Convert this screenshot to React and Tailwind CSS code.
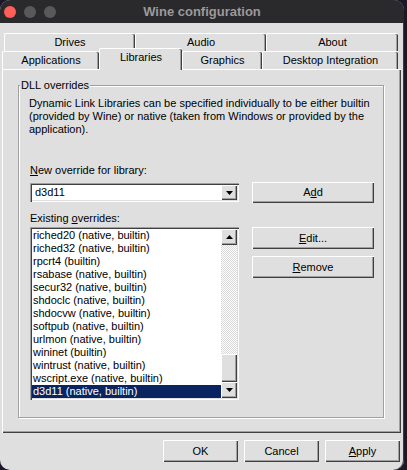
import React from "react";

const raised =
  "shadow-[inset_1px_1px_0_#ffffff,inset_-1px_-1px_0_#404040,inset_-2px_-2px_0_#a0a0a0]";
const sunken =
  "shadow-[inset_1px_1px_0_#a0a0a0,inset_2px_2px_0_#404040,inset_-1px_-1px_0_#ffffff,inset_-2px_-2px_0_#dfdfdf]";

function Down() {
  return (
    <svg width="7" height="4" viewBox="0 0 7 4">
      <path d="M0 0h7L3.5 4z" fill="#000" />
    </svg>
  );
}
function Up() {
  return (
    <svg width="7" height="4" viewBox="0 0 7 4">
      <path d="M0 4h7L3.5 0z" fill="#000" />
    </svg>
  );
}

function Tab({ w, children }) {
  return (
    <div
      className={`${w} h-[18px] rounded-t-[2px] border-t border-l border-white shadow-[inset_-1px_0_0_#404040,inset_-2px_0_0_#a0a0a0] flex items-center justify-center`}
    >
      {children}
    </div>
  );
}

function Btn({ w, h, children, className = "" }) {
  return (
    <div
      className={`${w} ${h} ${raised} bg-[#dfdfdf] flex items-center justify-center ${className}`}
    >
      {children}
    </div>
  );
}

const items = [
  "riched20 (native, builtin)",
  "riched32 (native, builtin)",
  "rpcrt4 (builtin)",
  "rsabase (native, builtin)",
  "secur32 (native, builtin)",
  "shdoclc (native, builtin)",
  "shdocvw (native, builtin)",
  "softpub (native, builtin)",
  "urlmon (native, builtin)",
  "wininet (builtin)",
  "wintrust (native, builtin)",
  "wscript.exe (native, builtin)",
  "d3d11 (native, builtin)",
];

export default function App() {
  return (
    <div className="w-[407px] h-[470px] bg-[#1c1729] font-['Liberation_Sans',sans-serif] text-[11px] leading-[13px] text-black">
      <div className="w-[404px] h-[470px] bg-[#dfdfdf] rounded-[10px] overflow-hidden flex flex-col shadow-[inset_-1px_0_0_#3a3a3a]">
        {/* title bar */}
        <div className="h-[23px] bg-[#2a292c] relative flex items-center pl-[4px] gap-[8px] shrink-0">
          <div className="w-[12px] h-[12px] rounded-full bg-[#fe5f57]" />
          <div className="w-[12px] h-[12px] rounded-full bg-[#59585b]" />
          <div className="w-[12px] h-[12px] rounded-full bg-[#59585b]" />
          <div className="absolute inset-0 flex items-center justify-center text-[13px] font-bold text-[#9a9a9a]">
            Wine configuration
          </div>
        </div>

        {/* tabs row 1 */}
        <div className="mt-[10px] ml-[4px] flex">
          <Tab w="w-[131px]">Drives</Tab>
          <Tab w="w-[131px]">Audio</Tab>
          <Tab w="w-[132px]">About</Tab>
        </div>
        {/* tabs row 2 */}
        <div className="ml-[2px] flex h-[18px] items-start">
          <Tab w="w-[97px]">Applications</Tab>
          <div className="relative z-10 -mt-[3px] w-[83px] h-[22px] rounded-t-[2px] border-t border-l border-white bg-[#dfdfdf] shadow-[inset_-1px_0_0_#404040,inset_-2px_0_0_#a0a0a0] flex justify-center pt-[2px]">
            Libraries
          </div>
          <Tab w="w-[80px]">Graphics</Tab>
          <Tab w="w-[136px]">Desktop Integration</Tab>
        </div>

        {/* panel */}
        <div className="ml-[2px] w-[399px] h-[364px] border-t border-l border-white shadow-[inset_-1px_-1px_0_#404040,inset_-2px_-2px_0_#a0a0a0]">
          <div className="relative mt-[15px] ml-[15px] w-[366px] h-[333px] border border-[#a0a0a0] shadow-[1px_1px_0_#ffffff,inset_1px_1px_0_#ffffff] pl-[10px] pt-[11px]">
            <div className="absolute -top-[7px] left-[1px] bg-[#dfdfdf] px-[1px]">
              DLL overrides
            </div>
            <div className="whitespace-nowrap">
              Dynamic Link Libraries can be specified individually to be either builtin
              <br />
              (provided by Wine) or native (taken from Windows or provided by the
              <br />
              application).
            </div>

            <div className="mt-[28px] ml-[1px] flex">
              {/* left column */}
              <div className="w-[209px] flex flex-col">
                <div className="h-[13px]">
                  <span className="underline">N</span>ew override for library:
                </div>
                <div className={`mt-[6px] h-[19px] bg-white ${sunken} p-[2px] flex`}>
                  <div className="flex-1 pl-[3px] flex items-center">d3d11</div>
                  <div className={`w-[16px] h-[15px] bg-[#dfdfdf] ${raised} flex items-center justify-center`}>
                    <Down />
                  </div>
                </div>
                <div className="mt-[10px] h-[13px]">
                  Existing <span className="underline">o</span>verrides:
                </div>
                <div className={`mt-[2px] h-[173px] bg-white ${sunken} p-[2px] flex`}>
                  <div className="flex-1 flex flex-col">
                    {items.map((t, i) => (
                      <div
                        key={t}
                        className={`h-[13px] pl-[1px] whitespace-nowrap ${
                          i === items.length - 1 ? "bg-[#0a2461] text-white" : ""
                        }`}
                      >
                        {t}
                      </div>
                    ))}
                  </div>
                  <div className="w-[16px] flex flex-col">
                    <div className={`h-[16px] bg-[#dfdfdf] ${raised} flex items-center justify-center`}>
                      <Up />
                    </div>
                    <div className="flex-1 bg-[repeating-conic-gradient(#ffffff_0%_25%,#d8d8d8_0%_50%)] bg-[length:2px_2px]" />
                    <div className={`h-[28px] bg-[#dfdfdf] ${raised}`} />
                    <div className={`h-[16px] bg-[#dfdfdf] ${raised} flex items-center justify-center`}>
                      <Down />
                    </div>
                  </div>
                </div>
              </div>

              {/* right column */}
              <div className="ml-[13px] w-[122px] flex flex-col">
                <Btn w="w-[122px]" h="h-[21px]" className="mt-[18px]">
                  <span>
                    A<span className="underline">d</span>d
                  </span>
                </Btn>
                <Btn w="w-[122px]" h="h-[22px]" className="mt-[24px]">
                  <span>
                    <span className="underline">E</span>dit...
                  </span>
                </Btn>
                <Btn w="w-[122px]" h="h-[22px]" className="mt-[7px]">
                  <span>
                    <span className="underline">R</span>emove
                  </span>
                </Btn>
              </div>
            </div>
          </div>
        </div>

        {/* bottom buttons */}
        <div className="mt-[7px] flex justify-end gap-[6px] pr-[4px]">
          <Btn w="w-[75px]" h="h-[22px]">OK</Btn>
          <Btn w="w-[75px]" h="h-[22px]">Cancel</Btn>
          <Btn w="w-[75px]" h="h-[22px]">
            <span>
              <span className="underline">A</span>pply
            </span>
          </Btn>
        </div>
      </div>
    </div>
  );
}
